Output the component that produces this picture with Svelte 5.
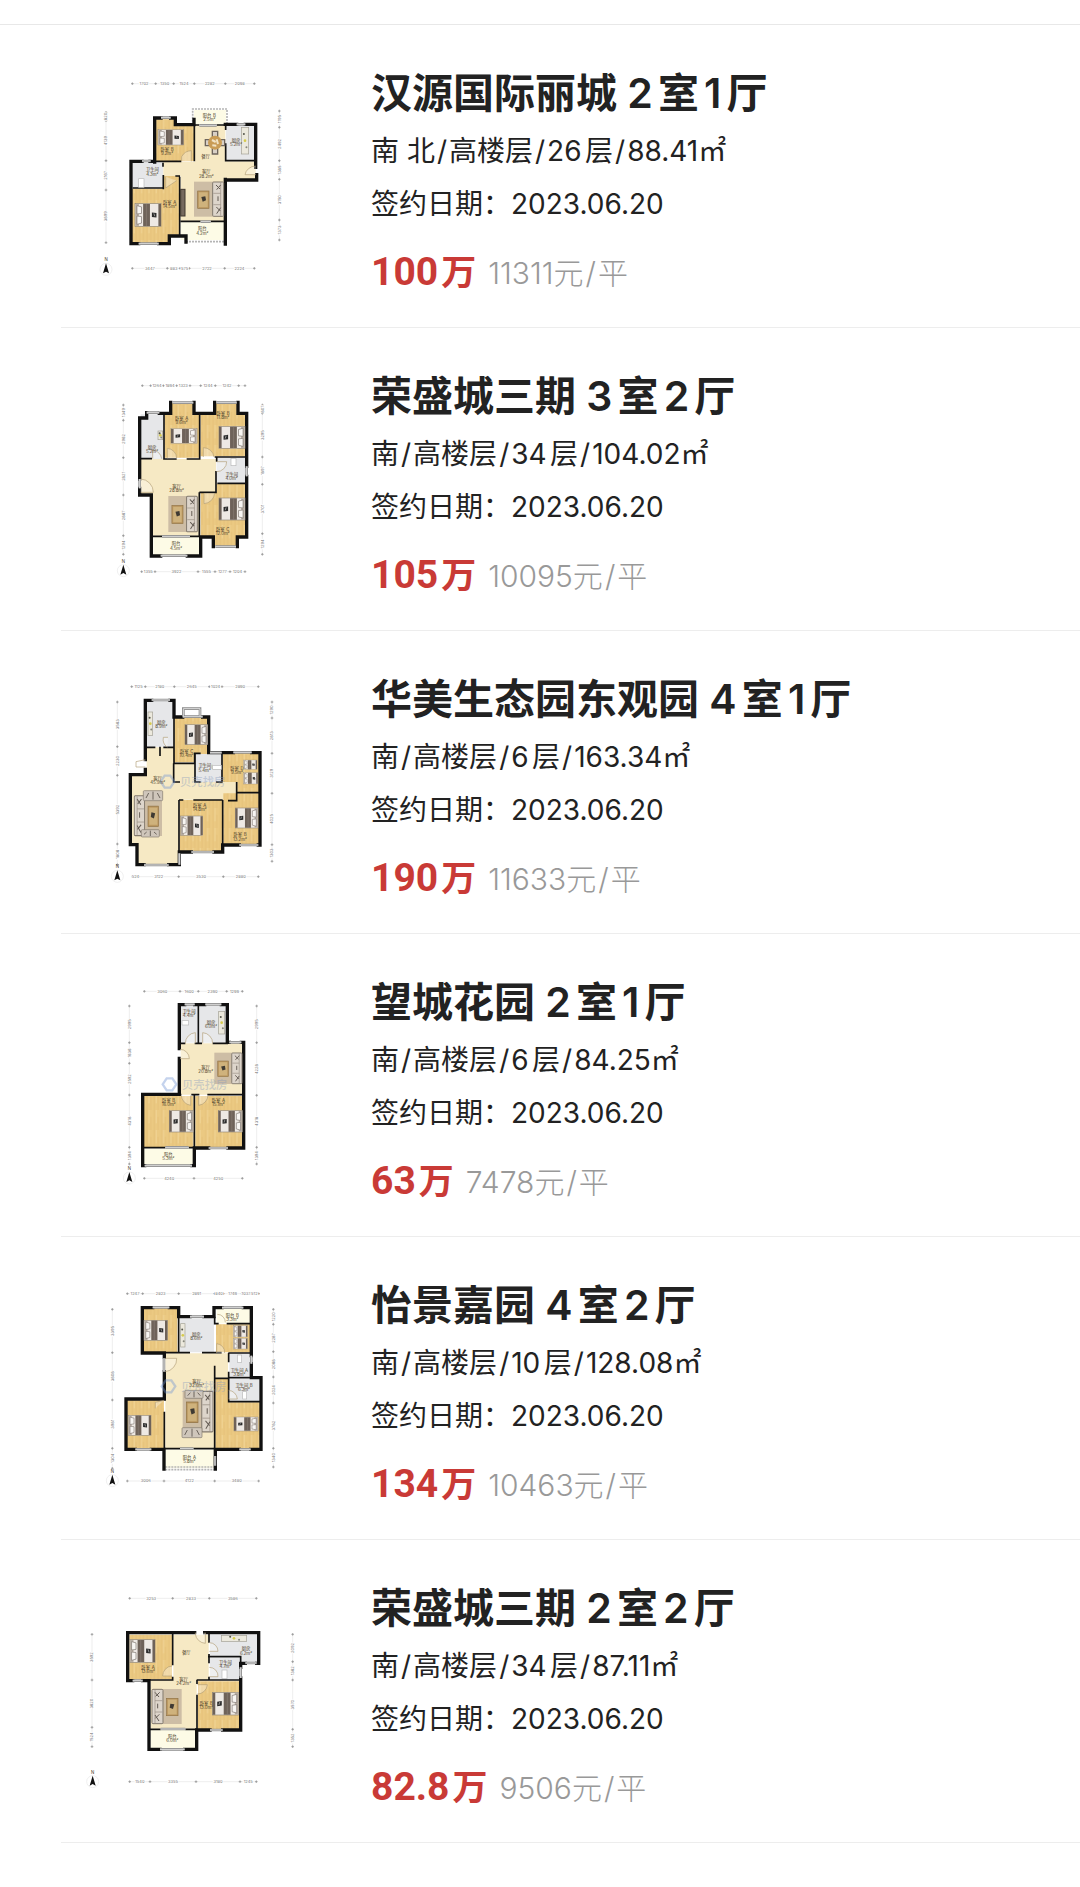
<script>
    // every plan is drawn on a 690 x 690 grid
    // floors: [kind, path], beds and sofas: [x, y, width, height, mirrored]
    // labels: [name, area, x, y], rows and cols: [offset, ticks, lengths]
    const plans = {
        hanyuan: {
            top: 6,
            floors: [
                ["wood", "M225 178H285V195H342V304H225Z"],
                ["wood", "M155 386H250V348H300V524H266V548H155Z"],
                ["tile", "M158 308H250V384H158Z"],
                ["tile", "M438 196H525V302H438Z"],
                ["cream", "M344 196H436V304H527V358H436V484H302V348H250V306H344Z"],
                ["pale", "M302 486H434V540H302Z"],
                ["pale", "M342 150H438V194H342Z"],
            ],
            walls: "M224 306V174H243M272 174H286V194H342V178M186 304H153V551H176M236 551H268V528H298M298 528H318V546M210 304H222M436 360H530V344M527 322V193H496M470 193H436M436 358V552",
            thin: "M224 304H304M343 194V304M249 308V320M158 384H252M250 345V388M299 350V528M302 484H362M392 484H434M437 196V210M437 250V302H527M286 348H300M345 195H358M410 195H436",
            windows: "M243 173H272M186 303H212M470 193H496M176 551H236M362 485H392M358 196H410",
            rails: "M318 545H440M338 194V147H441V194",
            doors: "M305 304V290A34 34 0 0 1 334 272V304M257 350V384L290 362M527 318A34 30 0 0 0 495 344H527",
            beds: [[234, 209, 76, 46, false], [165, 431, 78, 68, false]],
            sofas: [[342, 365, 90, 105, false]],
            cupboards: [[302, 388, 13, 80]],
            counters: [[484, 202, 22, 80]],
            basins: [[176, 356, 16, 26]],
            dining: [405, 248],
            labels: [
                ["卧室B", "9.2m²", 261, 272], ["厨房", "5.2m²", 468, 245], ["餐厅", "", 377, 293],
                ["客厅", "28.2m²", 379, 340], ["卫生间", "4.3m²", 217, 334], ["卧室A", "14.5m²", 269, 431],
                ["阳台", "4.2m²", 367, 511], ["阳台B", "2.5m²", 388, 171],
            ],
            rows: [
                [71, [157, 227, 281, 343, 436, 523], ["1702", "1350", "1524", "2282", "2098"]],
                [625, [157, 262, 300, 328, 434, 523], ["3447", "883", "575", "2722", "2224"]],
            ],
            cols: [
                [78, [157, 182, 302, 390, 548], ["820", "4139", "2167", "3899"]],
                [598, [153, 202, 302, 358, 480, 540], ["1195", "2492", "1385", "3150", "1373"]],
            ],
            north: [78, 628],
        },
        rongsheng3: {
            top: 0,
            floors: [
                ["tile", "M182 148H250V282H182Z"],
                ["wood", "M254 145H275V114H342V145H358V278H254Z"],
                ["wood", "M362 145H405V114H474V145H497V274H362Z"],
                ["tile", "M410 278H498V352H410Z"],
                ["cream", "M182 282H408V382H358V512H218V390H182Z"],
                ["wood", "M362 382H410V356H497V514H470V542H400V514H362Z"],
                ["pale", "M220 516H358V570H220Z"],
            ],
            walls: "M179 342V159H200V143M238 145H272V112M342 112V145H404V112M474 112V145H500V304M500 334V516H472V545M400 545V516H362V573H322M242 573H214V390H179V370",
            thin: "M252 148V282H290M182 281H216M359 145V282H320M404 276H500M410 276V290M408 318V382H358M358 382V514M218 514H246M330 514H360M412 355H500",
            windows: "M200 143H238M278 113H340M410 113H470M500 304V334M242 572H322M406 545H468M246 514H330M179 342V370",
            rails: "",
            doors: "M182 342A40 40 0 0 1 220 382H182M290 280A30 30 0 0 0 262 250V280M402 276A32 32 0 0 0 370 248V276M410 290H440A30 30 0 0 1 410 320M404 384A34 34 0 0 1 372 416V384M218 281V255A30 30 0 0 1 245 281",
            beds: [[273, 191, 78, 44, true], [417, 184, 78, 66, true], [417, 399, 78, 66, true]],
            sofas: [[265, 393, 88, 108, false]],
            cupboards: [],
            counters: [[234, 198, 14, 26]],
            basins: [[453, 280, 15, 22]],
            labels: [
                ["厨房", "5.2m²", 216, 252], ["卧室A", "9.6m²", 305, 164], ["卧室B", "11.8m²", 429, 149],
                ["客厅", "28.8m²", 290, 369], ["卫生间", "4.0m²", 455, 333], ["卧室C", "12.0m²", 428, 497],
                ["阳台", "4.5m²", 288, 541],
            ],
            rows: [
                [62, [187, 212, 250, 290, 330, 362, 406, 476, 495], ["", "1264", "1894", "1323", "", "1244", "1242", ""]],
                [620, [185, 225, 354, 405, 450, 495], ["1355", "3922", "1555", "1277", "1204"]],
            ],
            cols: [
                [130, [120, 166, 278, 390, 512, 568], ["1349", "2962", "2821", "2867", "1294"]],
                [547, [120, 145, 276, 358, 506, 568], ["807", "3295", "1897", "3701", "1294"]],
            ],
            north: [130, 617],
        },
        huamei: {
            top: 0,
            floors: [
                ["tile", "M198 98H280V236H198Z"],
                ["wood", "M283 148H384V283H280V240H283Z"],
                ["cream", "M200 238H280V286H344V342H468V395H298V588H172V532H152V320H200Z"],
                ["tile", "M346 258H424V342H346Z"],
                ["wood", "M428 254H540V372H472V342H428Z"],
                ["wood", "M430 376H540V530H430Z"],
                ["wood", "M300 396H426V550H300Z"],
            ],
            walls: "M215 97H196V275M196 304V320H151V530H171V590H192M266 590H298V552H334M402 552H428V531H478M535 531H540V254H515M460 254H425M425 254H390M386 254V147H368M308 147H282V97H270",
            thin: "M282 97V136M282 148V286H344V256H362M196 238H226M240 236V264M250 238H282M281 286V342H300M345 256V342H362M408 342H428M426 258V342M470 342V398H444M470 374H540M428 396V552M297 396V556M297 396H310M340 396H428",
            windows: "M215 96H270M308 146H368M390 254H425M460 253H515M192 591H266M334 552H402M478 531H535M298 556V590M310 145V122H360V145",
            rails: "",
            doors: "M196 275L168 281V297H196M262 238A30 30 0 0 1 250 208H264M396 290V302H422",
            beds: [
                [315, 170, 68, 60, true], [302, 444, 66, 58, false], [466, 420, 68, 60, true],
                [491, 276, 40, 28, false], [491, 314, 42, 34, false],
            ],
            sofas: [[162, 382, 84, 122, true]],
            couches: [[190, 368, 58, 30], [184, 485, 54, 22]],
            cupboards: [],
            counters: [[204, 132, 14, 70]],
            basins: [[398, 292, 26, 12]],
            labels: [
                ["厨房", "8.9m²", 244, 167], ["卧室C", "10.4m²", 320, 255], ["卫生间", "5.4m²", 374, 298],
                ["卧室D", "9.5m²", 471, 305], ["客厅", "45.9m²", 233, 336], ["卧室A", "14.8m²", 359, 417],
                ["卧室B", "13.2m²", 480, 505],
            ],
            rows: [
                [56, [155, 196, 283, 388, 426, 535], ["1125", "2180", "2645", "1024", "2890"]],
                [626, [157, 176, 296, 430, 535], ["524", "3122", "3530", "2880"]],
            ],
            cols: [
                [112, [102, 236, 322, 528, 590], ["3563", "2230", "5392", "1806"]],
                [576, [102, 150, 256, 376, 530, 580], ["1290", "2813", "3129", "4025", "1303"]],
            ],
            north: [112, 625],
            mark: [262, 341],
        },
        wangcheng: {
            top: 3,
            floors: [
                ["tile", "M302 108H352V218H302Z"],
                ["tile", "M358 108H440V218H358Z"],
                ["cream", "M302 220H488V374H302Z"],
                ["wood", "M190 378H340V532H190Z"],
                ["wood", "M346 378H488V532H346Z"],
                ["pale", "M190 536H340V584H190Z"],
            ],
            walls: "M314 104H298V236M298 265V373H188V587H194M336 587H343V534H386M444 534H491V217H484M448 217H442V104H424M374 104H344",
            thin: "M355 106V220M300 220H316M344 220H366M398 220H444M298 374H304M334 374H358M382 374H490M343 376V534M190 533H256M326 533H343",
            windows: "M314 103H344M376 103H424M448 217H484M386 534H444M194 587H336M256 532H326",
            rails: "",
            doors: "M300 238A28 28 0 0 1 328 266H300M316 220A32 32 0 0 1 346 188V220M398 220A32 32 0 0 0 368 188V220M304 376A32 32 0 0 0 332 406V376M384 376A32 32 0 0 1 356 406V376",
            beds: [[268, 422, 72, 64, true], [415, 422, 72, 64, true]],
            sofas: [[403, 248, 84, 94, false]],
            cupboards: [],
            counters: [[416, 124, 18, 68]],
            basins: [[306, 152, 20, 13]],
            labels: [
                ["卫生间", "4.4m²", 327, 128], ["厨房", "6.0m²", 393, 162], ["客厅", "20.8m²", 377, 296],
                ["卧室B", "16.0m²", 266, 395], ["卧室A", "15.1m²", 415, 395], ["阳台", "5.3m²", 265, 558],
            ],
            rows: [
                [64, [193, 300, 355, 440, 487], ["3060", "1600", "2390", "1299"]],
                [625, [193, 342, 487], ["4240", "4250"]],
            ],
            cols: [
                [148, [108, 218, 280, 375, 532, 582], ["2995", "1636", "2592", "4318", "1394"]],
                [530, [108, 218, 376, 532, 582], ["2995", "4228", "4318", "1394"]],
            ],
            north: [148, 624],
            mark: [268, 343],
        },
        yijing: {
            top: -3,
            floors: [
                ["wood", "M192 100H292V232H192Z"],
                ["tile", "M300 130H402V232H300Z"],
                ["pale", "M410 100H512V145H410Z"],
                ["wood", "M408 148H510V232H408Z"],
                ["cream", "M258 235H444V308H404V520H256V236Z"],
                ["tile", "M448 236H512V304H448Z"],
                ["tile", "M446 312H538V378H446Z"],
                ["wood", "M406 310H444V382H540V520H406Z"],
                ["wood", "M140 376H252V520H140Z"],
                ["pale", "M256 524H404V580H256Z"],
            ],
            walls: "M218 98H187V234H253V246M253 290V372H138V523H166M214 523H252V582M406 582V523H478M512 523H543V308H514V266M514 242V98H490M426 98H402V125H372M330 125H296V98H268",
            thin: "M296 125V233M258 233H330M366 233H404M404 125V146H416M440 146H512M404 233H425M445 234H514M446 234V262M446 290V308H540M446 308V380H540M404 272V520M404 310H446M253 410V520M253 521H300M340 521H406",
            windows: "M218 97H268M330 125H372M426 98H490M514 242V266M166 523H214M478 523H512M300 521H340M405 543V572M252 250V290",
            rails: "M256 576H404M256 584H404",
            doors: "M256 250H290A38 38 0 0 1 256 290M252 376L226 382V400M434 234A26 26 0 0 0 410 206V234M446 346A28 28 0 0 1 472 372H446M412 118A24 24 0 0 1 436 142",
            beds: [
                [192, 136, 70, 60, false], [145, 421, 68, 60, false], [462, 426, 72, 42, true],
                [460, 152, 42, 34, false], [460, 190, 42, 32, false],
            ],
            sofas: [[308, 348, 92, 124, false]],
            couches: [[315, 346, 54, 24], [306, 458, 60, 30]],
            cupboards: [],
            counters: [[302, 146, 13, 70]],
            basins: [[472, 240, 13, 22], [488, 350, 12, 22]],
            labels: [
                ["厨房", "8.6m²", 349, 182], ["阳台B", "3.3m²", 457, 126], ["卫生间A", "3.8m²", 478, 290],
                ["卫生间B", "6.3m²", 492, 335], ["客厅", "32.6m²", 350, 323], ["阳台A", "5.8m²", 328, 552],
            ],
            rows: [
                [56, [142, 188, 296, 404, 430, 486, 510, 536], ["1247", "2823", "2891", "840", "1749", "1037", "512"]],
                [618, [142, 252, 404, 536], ["3006", "4122", "3480"]],
            ],
            cols: [
                [97, [103, 233, 375, 520, 580], ["3395", "3808", "3981", "1304"]],
                [580, [103, 148, 230, 306, 384, 520, 576], ["1220", "2287", "2068", "2024", "3782", "1340"]],
            ],
            north: [97, 617],
            mark: [265, 334],
        },
        rongsheng2: {
            top: -9,
            floors: [
                ["wood", "M148 164H276V298H148Z"],
                ["cream", "M280 164H386V302H350V446H212V300H280Z"],
                ["tile", "M390 164H534V248H482V228H390Z"],
                ["tile", "M390 234H480V298H390Z"],
                ["wood", "M354 304H480V448H354Z"],
                ["pale", "M212 450H348V506H212Z"],
            ],
            walls: "M344 158H143V302H158M188 302H207V508H240M314 508H350V450H390M428 450H482V294M482 262V250H496M530 250H536V158H374",
            thin: "M278 162V256M278 290V300H206M387 162V188M387 222V250M387 290V300H350M384 230H482V262M374 300H482M351 300V312M351 344V448M210 448H242M316 448H352",
            windows: "M158 302H188M240 508H314M390 450H428M482 262V294M496 249H530M242 447H316",
            rails: "",
            doors: "M346 158V162A32 32 0 0 0 376 190V158M388 188A26 26 0 0 1 414 214H388M388 262A26 26 0 0 1 414 290H388M276 258A30 30 0 0 0 248 288H276M352 342A30 30 0 0 0 382 314H352",
            beds: [[149, 179, 76, 68, false], [398, 337, 78, 68, true]],
            sofas: [[215, 327, 90, 105, true]],
            cupboards: [],
            counters: [[424, 166, 76, 18]],
            basins: [[426, 270, 15, 26]],
            labels: [
                ["卧室A", "13.6m²", 204, 266], ["餐厅", "", 319, 221], ["客厅", "24.2m²", 311, 302],
                ["厨房", "6.2m²", 498, 211], ["卫生间", "4.7m²", 436, 252], ["卧室B", "13.0m²", 379, 374],
                ["阳台", "6.0m²", 277, 474],
            ],
            rows: [
                [55, [149, 278, 388, 529], ["3253", "2833", "3586"]],
                [605, [149, 210, 348, 480, 529], ["1540", "3355", "3180", "1245"]],
            ],
            cols: [
                [36, [163, 300, 442, 500], ["3592", "3620", "1524"]],
                [638, [163, 245, 300, 448, 500], ["2092", "1362", "3570", "1352"]],
            ],
            north: [38, 605],
        },
    };

    const deals = [
        { plan: "hanyuan", title: "汉源国际丽城 2室1厅", info: ["南 北", "高楼层", "26层", "88.41㎡"], date: "2023.06.20", total: "100", unit: "11311" },
        { plan: "rongsheng3", title: "荣盛城三期 3室2厅", info: ["南", "高楼层", "34层", "104.02㎡"], date: "2023.06.20", total: "105", unit: "10095" },
        { plan: "huamei", title: "华美生态园东观园 4室1厅", info: ["南", "高楼层", "6层", "163.34㎡"], date: "2023.06.20", total: "190", unit: "11633" },
        { plan: "wangcheng", title: "望城花园 2室1厅", info: ["南", "高楼层", "6层", "84.25㎡"], date: "2023.06.20", total: "63", unit: "7478" },
        { plan: "yijing", title: "怡景嘉园 4室2厅", info: ["南", "高楼层", "10层", "128.08㎡"], date: "2023.06.20", total: "134", unit: "10463" },
        { plan: "rongsheng2", title: "荣盛城三期 2室2厅", info: ["南", "高楼层", "34层", "87.11㎡"], date: "2023.06.20", total: "82.8", unit: "9506" },
    ];

    function place([x, y, w, h, mirrored], baseW, baseH) {
        const sx = w / baseW;
        const sy = h / baseH;
        return mirrored
            ? `translate(${x + w} ${y}) scale(${-sx} ${sy})`
            : `translate(${x} ${y}) scale(${sx} ${sy})`;
    }
</script>

{#snippet bed(box)}
    <g transform={place(box, 80, 70)}>
        <rect width="80" height="70" fill="#eee9e4" stroke="#8d8478" stroke-width="2" />
        <path d="M1 1H12V69H1Z" fill="#b9afa4" />
        <path d="M6 6L20 10V30L6 32ZM6 38L20 40V60L6 64Z" fill="#f7f5f2" stroke="#78706a" stroke-width="2" />
        <path d="M25 1H46V69H25ZM72 1H80V69H72Z" fill="#6e6259" />
        <path d="M35 1V69" stroke="#8b8077" stroke-width="2" />
        <path d="M52 27L66 29V43L52 41Z" fill="#2b2b2b" />
        <path d="M58 30L61 39" stroke="#ccc" stroke-width="2" />
    </g>
{/snippet}

{#snippet sofa(box)}
    <g transform={place(box, 90, 105)}>
        <rect width="58" height="105" fill="#cdbda5" />
        <rect x="11" y="28" width="34" height="52" fill="#bd9a63" stroke="#917344" stroke-width="2" />
        <rect x="15" y="32" width="26" height="44" fill="#cfb27c" />
        <path d="M22 46L34 44L36 56L26 60Z" fill="#3f3a33" />
        <rect x="56" y="1" width="33" height="103" rx="3" fill="#ddd5cb" stroke="#82796e" stroke-width="3" />
        <path d="M58 35H80M58 69H80M80 3V102" stroke="#978d82" stroke-width="2" />
        <path d="M66 10L78 22M80 10L68 24M67 76L79 88M80 78L68 96M72 44V58" stroke="#625a53" stroke-width="3" />
    </g>
{/snippet}

{#snippet floorPlan(plan)}
    <svg class="plan" viewBox="0 {plan.top} 690 690" aria-hidden="true">
        {#each plan.floors as [kind, d]}
            <path class={kind} {d} />
            {#if kind === "wood"}
                <path fill="url(#planks)" {d} />
            {/if}
        {/each}
        <path class="rail" d={plan.rails} />
        <path class="wall" d={plan.walls} />
        <path class="wall thin" d={plan.thin} />
        <path class="window-edge" d={plan.windows} />
        <path class="window" d={plan.windows} />
        <path class="door" d={plan.doors} />

        {#each plan.beds as box}
            {@render bed(box)}
        {/each}
        {#each plan.sofas as box}
            {@render sofa(box)}
        {/each}
        {#each plan.couches ?? [] as [x, y, w, h]}
            <rect {x} {y} width={w} height={h} rx="3" fill="#cfc6bb" stroke="#82796e" stroke-width="2" />
            <path d="M{x + w / 2} {y + 3}V{y + h - 3}M{x + 8} {y + h - 8}L{x + 16} {y + 7}M{x + w - 8} {y + h - 8}L{x + w - 16} {y + 7}" stroke="#6d655d" stroke-width="3" />
        {/each}
        {#each plan.cupboards as [x, y, w, h]}
            <rect {x} {y} width={w} height={h} fill="#766a5f" stroke="#40382f" stroke-width="3" />
        {/each}
        {#each plan.counters as [x, y, w, h]}
            <rect {x} {y} width={w} height={h} fill="#ece9dd" stroke="#a2a093" stroke-width="2" />
            <circle cx={x + w * 0.5} cy={y + h * 0.5} r="4" fill="#d6cb4d" />
            <circle cx={x + w * 0.35} cy={y + h * 0.25} r="3" fill="#55564c" />
            <circle cx={x + w * 0.7} cy={y + h * 0.75} r="3" fill="#85867c" />
        {/each}
        {#each plan.basins as [x, y, w, h]}
            <rect {x} {y} width={w} height={h} fill="#fff" stroke="#b9b9b9" stroke-width="2" />
        {/each}
        {#if plan.dining}
            <g transform="translate({plan.dining[0]} {plan.dining[1]})">
                <path d="M-8 -34H8V34H-8ZM-29 -9H29V9H-29Z" fill="#d8d0c6" stroke="#6d655d" stroke-width="4" />
                <circle r="21" fill="#c99c55" />
                <path d="M-9 -8L2 -2M5 -10L9 4M-8 8L4 9" stroke="#f1e3c4" stroke-width="6" />
            </g>
        {/if}

        {#if plan.mark}
            <g class="mark">
                <path transform="translate({plan.mark[0]} {plan.mark[1]})" d="M-20 0L-8 -18H9L21 0L9 18H-8Z" />
                <text x={plan.mark[0] + 38} y={plan.mark[1] + 13}>贝壳找房</text>
            </g>
        {/if}

        {#each plan.labels as [name, area, x, y]}
            <text class="label" {x} {y}>{name}</text>
            <text class="label" {x} y={y + 13}>{area}</text>
        {/each}

        {#each plan.rows as [y, ticks, sizes]}
            <path class="ruler" d="M{ticks[0]} {y}H{ticks[ticks.length - 1]}" />
            {#each ticks as x}
                <path class="tick" d="M{x - 4} {y}H{x + 4}M{x} {y - 4}V{y + 4}" />
            {/each}
            {#each sizes as size, i}
                <text class="size" x={(ticks[i] + ticks[i + 1]) / 2} y={y + 4}>{size}</text>
            {/each}
        {/each}
        {#each plan.cols as [x, ticks, sizes]}
            <path class="ruler" d="M{x} {ticks[0]}V{ticks[ticks.length - 1]}" />
            {#each ticks as y}
                <path class="tick" d="M{x - 4} {y}H{x + 4}M{x} {y - 4}V{y + 4}" />
            {/each}
            {#each sizes as size, i}
                <text class="size" transform="translate({x + 4} {(ticks[i] + ticks[i + 1]) / 2}) rotate(-90)">{size}</text>
            {/each}
        {/each}

        <g transform="translate({plan.north[0]} {plan.north[1]})">
            <circle r="18" fill="#fff" stroke="#e8e8e8" stroke-width="2" />
            <path d="M0 -18L9 12L0 7L-9 12Z" fill="#111" />
            <text class="label" y="-24">N</text>
        </g>
    </svg>
{/snippet}

<svg class="defs" width="0" height="0" aria-hidden="true">
    <defs>
        <pattern id="planks" width="22" height="60" patternUnits="userSpaceOnUse">
            <path d="M3 0V60M14 20V60" stroke="#dcb56c" stroke-width="3" opacity="0.4" />
            <path d="M9 0V40" stroke="#f4da9f" stroke-width="4" opacity="0.5" />
        </pattern>
    </defs>
</svg>

<main>
    <ul>
        {#each deals as deal}
            <li>
                <a href="#{deal.plan}">
                    {@render floorPlan(plans[deal.plan])}
                    <div class="detail">
                        <h2>{deal.title}</h2>
                        <p>
                            {#each deal.info as part, i}{#if i > 0}<span class="slash">/</span>{/if}{part}{/each}
                        </p>
                        <p>签约日期：{deal.date}</p>
                        <div class="price">
                            <strong>{deal.total}<span class="wan">万</span></strong>
                            <span class="unit">{deal.unit}元<span class="slash">/</span>平</span>
                        </div>
                    </div>
                </a>
            </li>
        {/each}
    </ul>
</main>

<style>
    :global(body) {
        margin: 0;
        background: #fff;
    }
    .defs {
        display: block;
    }
    main {
        margin-top: 24px;
        padding-bottom: 44px;
        border-top: 1px solid #e8e8e8;
        color: #222;
        font-family: Inter, "Noto Sans CJK SC", sans-serif;
        text-autospace: normal;
    }
    ul {
        margin: 0;
        padding: 0 0 0 61px;
        list-style: none;
    }
    li {
        border-bottom: 1px solid #ededed;
    }
    a {
        display: flex;
        align-items: flex-start;
        gap: 61px;
        padding: 37px 24px 28px 19px;
        color: inherit;
        text-decoration: none;
    }
    .plan {
        flex: none;
        width: 230px;
        height: 230px;
    }
    .detail {
        flex: 1;
        min-width: 0;
        padding-top: 5px;
    }
    h2 {
        margin: 0 0 6px;
        font-size: 41px;
        font-weight: 600;
        line-height: 52px;
    }
    p {
        margin: 0;
        font-size: 28px;
        line-height: 53px;
    }
    .slash {
        margin: 0 2px;
    }
    .price {
        display: flex;
        align-items: center;
        gap: 12px;
        margin-top: 16px;
        line-height: 50px;
        text-autospace: no-autospace;
    }
    strong {
        color: #c93a36;
        font-family: Roboto, "Noto Sans CJK SC", sans-serif;
        font-size: 39px;
        font-weight: 700;
    }
    .wan {
        margin-left: 3px;
        font-size: 35px;
    }
    .unit {
        color: #999;
        font-size: 30px;
        font-weight: 300;
    }
    .wood {
        fill: #ebc982;
    }
    .cream {
        fill: #f6e9c4;
    }
    .tile {
        fill: #e6e7e9;
    }
    .pale {
        fill: #fdfbe6;
    }
    .wall {
        fill: none;
        stroke: #111;
        stroke-width: 10;
        stroke-linecap: square;
    }
    .thin {
        stroke-width: 5;
        stroke-linecap: butt;
    }
    .window-edge {
        fill: none;
        stroke: #8a8a8a;
        stroke-width: 8;
    }
    .window {
        fill: none;
        stroke: #dcdcdc;
        stroke-width: 3;
    }
    .rail {
        fill: none;
        stroke: #b5b5b5;
        stroke-width: 5;
        stroke-dasharray: 6 3;
    }
    .door {
        fill: #fff5;
        stroke: #b3a078;
        stroke-width: 2;
    }
    .label {
        fill: #4a3c28;
        font-size: 13px;
        text-anchor: middle;
    }
    .size {
        fill: #777;
        stroke: #fff;
        stroke-width: 5px;
        paint-order: stroke;
        font-size: 12px;
        text-anchor: middle;
    }
    .ruler {
        stroke: #ccc;
        stroke-width: 1;
    }
    .tick {
        stroke: #888;
        stroke-width: 2;
    }
    .mark {
        opacity: 0.4;
    }
    .mark path {
        fill: none;
        stroke: #6f93d4;
        stroke-width: 7;
    }
    .mark text {
        fill: #8a9cbd;
        font-size: 34px;
        font-weight: 500;
    }
</style>
